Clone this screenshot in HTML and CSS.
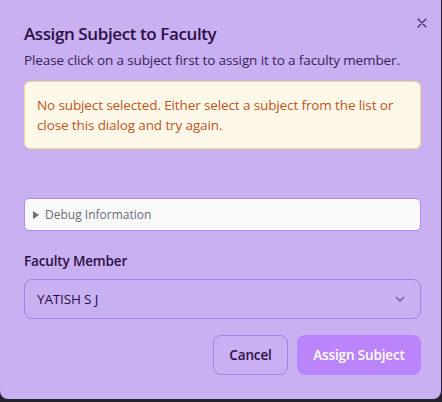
FILE: index.html
```html
<!DOCTYPE html>
<html lang="en">
<head>
<meta charset="utf-8">
<link rel="stylesheet" href="styles.css">
</head>
<body>
<div class="dialog">
  <button class="close" aria-label="Close">
    <svg width="10" height="10" viewBox="0 0 10 10"><path d="M1 1L9 9M9 1L1 9" stroke="#4a3270" stroke-width="1.3" stroke-linecap="round"/></svg>
  </button>
  <div class="header">
    <h2 class="title">Assign Subject to Faculty</h2>
    <p class="desc">Please click on a subject first to assign it to a faculty member.</p>
  </div>
  <div class="alert">No subject selected. Either select a subject from the list or close this dialog and try again.</div>
  <div class="spacer"></div>
  <details class="debug"><summary>Debug Information</summary></details>
  <div class="field">
    <label class="label">Faculty Member</label>
    <div class="select">
      <span>YATISH S J</span>
      <svg width="12" height="12" viewBox="0 0 12 12"><path d="M2.5 4.5L6 8L9.5 4.5" fill="none" stroke="#6d5597" stroke-width="1.2" stroke-linecap="round" stroke-linejoin="round"/></svg>
    </div>
  </div>
  <div class="actions">
    <button class="btn cancel">Cancel</button>
    <button class="btn primary">Assign Subject</button>
  </div>
</div>
</body>
</html>
```
FILE: styles.css
```css
* { box-sizing: border-box; }
html, body { margin: 0; padding: 0; }
body {
  background: #262330;
  width: 442px;
  height: 402px;
  font-family: "Open Sans", "Noto Sans", sans-serif;
}
.dialog {
  position: relative;
  width: 441px;
  height: 399px;
  background: #c8b0f2;
  border-radius: 0 0 8px 8px;
  padding: 22px 20px 0 24px;
  display: flex;
  flex-direction: column;
}
.close {
  position: absolute;
  top: 16px;
  right: 12px;
  width: 14px;
  height: 14px;
  padding: 0;
  border: 0;
  background: none;
  display: flex;
  align-items: center;
  justify-content: center;
}
.header { display: flex; flex-direction: column; gap: 4px; }
.title {
  margin: 0;
  font-size: 17px;
  line-height: 24px;
  font-weight: 600;
  color: #2c0f45;
  letter-spacing: -0.4px;
}
.desc {
  margin: 0;
  font-size: 13.5px;
  line-height: 20px;
  color: #3a2458;
  letter-spacing: -0.12px;
}
.alert {
  margin-top: 11px;
  background: #fdf8e8;
  border: 1px solid #f3d98a;
  border-radius: 6px;
  padding: 13px 12px 13px 12px;
  font-size: 13.5px;
  line-height: 20px;
  color: #c2551b;
  letter-spacing: -0.12px;
}
.spacer { height: 49px; }
.debug {
  height: 33px;
  background: #f8f9fb;
  border: 1px solid #b18ceb;
  border-radius: 5px;
  padding: 7px 8px;
}
.debug summary {
  list-style: none;
  display: flex;
  align-items: center;
  gap: 6px;
  font-size: 12px;
  line-height: 18px;
  color: #6b6e78;
  cursor: pointer;
}
.debug summary::-webkit-details-marker { display: none; }
.debug summary::before {
  content: "";
  width: 0;
  height: 0;
  border-top: 4px solid transparent;
  border-bottom: 4px solid transparent;
  border-left: 6px solid #6b6e78;
}
.field { margin-top: 20px; display: flex; flex-direction: column; gap: 8px; }
.label {
  font-size: 13.5px;
  line-height: 20px;
  font-weight: 600;
  color: #2c0f45;
  letter-spacing: -0.15px;
}
.select {
  height: 40px;
  border: 1px solid #a97fe8;
  border-radius: 8px;
  padding: 0 14px 0 12px;
  display: flex;
  align-items: center;
  justify-content: space-between;
  font-size: 13.5px;
  color: #2c0f45;
  letter-spacing: -0.15px;
}
.actions {
  margin-top: 16px;
  display: flex;
  justify-content: flex-end;
  gap: 9px;
}
.btn {
  height: 40px;
  border-radius: 8px;
  font-family: inherit;
  font-size: 13.5px;
  font-weight: 600;
  letter-spacing: -0.15px;
  padding: 0;
}
.cancel {
  width: 75px;
  background: transparent;
  border: 1px solid #a97fe8;
  color: #2c0f45;
}
.primary {
  width: 124px;
  background: #bc84fa;
  border: 0;
  color: #ffffff;
}
```
